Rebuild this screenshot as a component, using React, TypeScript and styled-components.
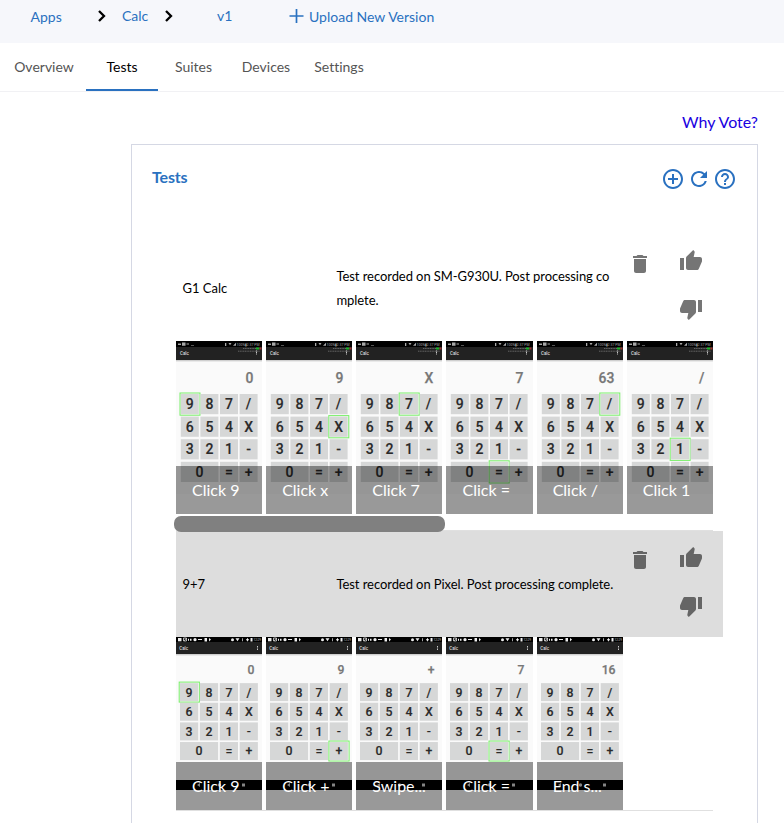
import React from "react";
import styled, { createGlobalStyle } from "styled-components";
import {
  MdAddCircleOutline,
  MdDelete,
  MdHelpOutline,
  MdRefresh,
  MdThumbDown,
  MdThumbUp,
} from "react-icons/md";

const GlobalStyle = createGlobalStyle`
  * { box-sizing: border-box; }
  html, body { margin: 0; background: #fff; }
  body {
    height: 823px;
    overflow: hidden;
    font-family: Lato, sans-serif;
    font-variant-ligatures: none;
    color: #111;
  }
  svg { display: block; flex: none; }
`;

const Page = styled.div`
  height: 823px;
  overflow: hidden;
`;

const Breadcrumbs = styled.nav`
  display: flex;
  height: 43px;
  padding-left: 30.5px;
  background: #f6f7fb;
`;

const Crumb = styled.a<{ $width: number; $top?: number }>`
  width: ${(p) => p.$width}px;
  padding-top: ${(p) => p.$top ?? 6}px;
  font-size: 14px;
  line-height: 19px;
  color: #2a71c0;
  white-space: nowrap;
`;

const Separator = styled.svg<{ $gap: number }>`
  width: 10px;
  height: 14px;
  margin: 9px ${(p) => p.$gap}px 0 0;
`;

const Plus = styled.svg`
  width: 15px;
  height: 15px;
  margin: 9px 5px 0 -0.5px;
`;

const Tabs = styled.div`
  display: flex;
  height: 49px;
  border-bottom: 1px solid #f1f1f4;
`;

const Tab = styled.button<{ $width: number; $shift?: number; $active?: boolean }>`
  width: ${(p) => p.$width}px;
  height: 48px;
  padding: 2px 0 0 ${(p) => p.$shift ?? 0}px;
  border: 0;
  border-bottom: 2px solid ${(p) => (p.$active ? "#2a71c0" : "transparent")};
  background: none;
  font: 14px/20px Lato, sans-serif;
  font-variant-ligatures: none;
  color: ${(p) => (p.$active ? "#000" : "#555")};
  text-align: center;
  white-space: nowrap;
`;

const Content = styled.main`
  width: 627px;
  margin-left: 131px;
`;

const VoteRow = styled.div`
  display: flex;
  justify-content: flex-end;
  height: 52px;
  padding-top: 19px;
`;

const VoteLink = styled.a`
  font-size: 16px;
  line-height: 22px;
  color: #1a00e0;
`;

const Card = styled.section`
  height: 720px;
  border: 1px solid #d5d8e4;
`;

const CardHeader = styled.header`
  display: flex;
  justify-content: space-between;
  height: 90px;
  padding: 22px 20px 0;
`;

const Title = styled.h2`
  margin: -1px 0 0;
  font-size: 16px;
  line-height: 22px;
  font-weight: 700;
  letter-spacing: -0.15px;
  color: #2a71c0;
`;

const Tools = styled.div`
  display: flex;
  gap: 2px;
  color: #2a71c0;
`;

const TestList = styled.div`
  width: 547px;
  margin-left: 44px;
`;

const TestRow = styled.div<{ $selected?: boolean }>`
  display: grid;
  grid-template-columns: 154px 291.5px 51px 24px;
  align-items: center;
  height: 106px;
  padding-left: 6.5px;
  background: ${(p) => (p.$selected ? "#ddd" : "#fff")};
  color: #000;
  font-size: 13px;
  line-height: 24px;
`;

const Status = styled.div`
  width: 280px;
  letter-spacing: -0.07px;
  word-break: break-all;
`;

const IconButton = styled.button`
  display: flex;
  padding: 0;
  border: 0;
  background: none;
  color: rgba(0, 0, 0, 0.54);
`;

const DeleteCell = styled.div`
  align-self: start;
  padding-top: 17px;
`;

const Votes = styled.div<{ $top: number }>`
  display: flex;
  flex-direction: column;
  gap: 24px;
  align-self: start;
  padding-top: ${(p) => p.$top}px;
`;

const Strip = styled.div<{ $height: number }>`
  width: 537px;
  height: ${(p) => p.$height}px;
  border-bottom: 1px solid #e0e0e0;
`;

const Frames = styled.div`
  display: flex;
  gap: 4px;
`;

const Frame = styled.figure`
  position: relative;
  flex: none;
  width: 86.17px;
  height: 173px;
  margin: 0;
  overflow: hidden;
`;

const Caption = styled.figcaption`
  position: absolute;
  inset: auto 0 0;
  height: 48px;
  padding: 12px 0 12px 16px;
  background: rgba(0, 0, 0, 0.4);
  color: #fff;
  font-size: 16px;
  line-height: 24px;
  white-space: nowrap;
`;

const ScrollThumb = styled.div`
  position: relative;
  z-index: 1;
  width: 271px;
  height: 16px;
  margin: 2px 0 0 -2px;
  border-radius: 7px;
  background: #808080;
`;

type Device = "galaxy" | "pixel";

interface Step {
  label: string;
  display: string;
  hit?: string;
}

const KEYS = [
  ["9", "8", "7", "/"],
  ["6", "5", "4", "X"],
  ["3", "2", "1", "-"],
  ["0", "=", "+"],
];

function GalaxyStatus() {
  return (
    <g fill="#a8a8a8" fontFamily="Roboto, sans-serif" fontSize="4.4">
      <path d="M2 2.5h3v1.4H2zM6 1.5h3.5v3.2H6zM10.5 2.5h2.5v1h-2.5zM15 4.3h3v.5h-3z" />
      <path d="M49 2h1.3v3H49zM52.5 2h3L54 4.3zM57 4.8l3-3v3z" />
      <text x="60.5" y="4.7" textLength="23" lengthAdjust="spacingAndGlyphs">
        100%▮2:37 PM
      </text>
      <path
        d="M67 7.5h13M62 10.2h22"
        stroke="#6c6c6c"
        strokeWidth=".9"
        strokeDasharray="1.2 .5"
      />
      <path d="M80 6.5h3.4v2H80z" fill="#18b828" />
      <path d="M83.4 6.5h2v2h-2z" fill="#a72c2c" />
    </g>
  );
}

function PixelStatus() {
  return (
    <g fill="#eee" fontFamily="Roboto, sans-serif" fontSize="4">
      <path d="M2 1h3.5v3.3H2z" />
      <path d="M7.5 1h3v3h-3zM8 4l2.5-3" fill="none" stroke="#ddd" strokeWidth=".8" />
      <path d="M12 1.7h1v2h-1zM14 1.7h1.5v2H14zM22 2h4v1.1h-4z" />
      <circle cx="19" cy="2.7" r="1.6" />
      <path d="M28.5 1h2.5v3.5h-2.5zM33 1v3.5l2-2z" />
      <circle cx="56.5" cy="2.7" r="1.5" />
      <path d="M59.5 1.3h4L61.5 4.3zM66 1.3h.7v3H66zM70 2.2h3v1h-3zM71 1.2h1v3h-1zM74.5 1h2v3.4h-2z" />
      <text x="77.5" y="4.2" fill="#ccc" textLength="7.5" lengthAdjust="spacingAndGlyphs">
        12:29
      </text>
    </g>
  );
}

function PhoneScreen({ device, display, hit }: { device: Device; display: string; hit?: string }) {
  const pixel = device === "pixel";
  const left = pixel ? 4 : 4.8;
  const top = pixel ? 46.1 : 53;
  const colStep = pixel ? 19.9 : 19.6;
  const rowStep = pixel ? 19.65 : 22.6;
  const keyWidth = pixel ? 18.2 : 18;
  const keyHeight = pixel ? 18 : 20.2;
  const headerTop = pixel ? 5 : 6;
  const headerEnd = pixel ? 17 : 19;
  return (
    <svg width="87" height="153" viewBox="0 0 87 153" fontFamily="Roboto, sans-serif">
      <rect width="87" height="153" fill="#fafafa" />
      <rect y={headerEnd} width="87" height="1.4" fill="#cfcfcf" />
      <rect width="87" height={headerEnd} fill="#222" />
      <rect width="87" height={headerTop} fill="#000" />
      {pixel ? <PixelStatus /> : <GalaxyStatus />}
      <text x={pixel ? 3.2 : 4} y={pixel ? 12.6 : 14.2} fontSize="4.5" fill="#ddd" fontWeight="500">
        Calc
      </text>
      <path
        d={pixel ? "M81.5 9v4" : "M80.5 9.5v4.5"}
        stroke="#ddd"
        strokeWidth=".9"
        strokeDasharray="1 .5"
      />
      <text
        x={pixel ? 78.5 : 77.3}
        y={pixel ? 37.1 : 41.9}
        textAnchor="end"
        fontSize={pixel ? 12.2 : 13.9}
        fontWeight="500"
        fill="#777"
        stroke="#777"
        strokeWidth=".25"
      >
        {display}
      </text>
      {KEYS.map((row, r) =>
        row.map((key, c) => {
          const wide = key === "0";
          const col = r === 3 && c > 0 ? c + 1 : c;
          const x = left + col * colStep;
          const y = top + r * rowStep;
          const w = wide ? keyWidth + colStep : keyWidth;
          return (
            <g key={key}>
              <rect x={x} y={y} width={w} height={keyHeight} fill="#d6d7d7" />
              <text
                x={x + w / 2}
                y={y + keyHeight / 2 + (pixel ? 4.4 : 4.9)}
                textAnchor="middle"
                fontSize={pixel ? 12.3 : 14}
                fontWeight="500"
                fill="#2a2a2a"
                stroke="#2a2a2a"
                strokeWidth=".15"
              >
                {key}
              </text>
              {hit === key && (
                <rect
                  x={x - 0.8}
                  y={y - 1}
                  width={w + 2}
                  height={keyHeight + 2}
                  fill="none"
                  stroke="#78ee68"
                  strokeWidth="1"
                />
              )}
            </g>
          );
        }),
      )}
      {pixel && (
        <g>
          <rect y="143" width="87" height="10" fill="#000" />
          <path d="M21 148l3-2v4z" fill="#ddd" />
          <circle cx="43.5" cy="148" r="1.7" fill="#ddd" />
          <rect x="66" y="146.5" width="3" height="3" fill="#ddd" />
        </g>
      )}
    </svg>
  );
}

function Filmstrip({ device, steps }: { device: Device; steps: Step[] }) {
  return (
    <Frames>
      {steps.map((step) => (
        <Frame key={step.label}>
          <PhoneScreen device={device} display={step.display} hit={step.hit} />
          <Caption>{step.label}</Caption>
        </Frame>
      ))}
    </Frames>
  );
}

function TestEntry({ name, status, selected }: { name: string; status: string; selected?: boolean }) {
  return (
    <TestRow $selected={selected}>
      <div>{name}</div>
      <Status>{status}</Status>
      <DeleteCell>
        <IconButton aria-label="Delete">
          <MdDelete size={24} />
        </IconButton>
      </DeleteCell>
      <Votes $top={selected ? 15 : 14}>
        <IconButton aria-label="Vote up">
          <MdThumbUp size={24} />
        </IconButton>
        <IconButton aria-label="Vote down">
          <MdThumbDown size={24} />
        </IconButton>
      </Votes>
    </TestRow>
  );
}

function Chevron({ gap }: { gap: number }) {
  return (
    <Separator $gap={gap} viewBox="0 0 10 14">
      <path d="M2 2l5 5-5 5" fill="none" stroke="#000" strokeWidth="2.3" />
    </Separator>
  );
}

const galaxySteps: Step[] = [
  { label: "Click 9", display: "0", hit: "9" },
  { label: "Click x", display: "9", hit: "X" },
  { label: "Click 7", display: "X", hit: "7" },
  { label: "Click =", display: "7", hit: "=" },
  { label: "Click /", display: "63", hit: "/" },
  { label: "Click 1", display: "/", hit: "1" },
];

const pixelSteps: Step[] = [
  { label: "Click 9", display: "0", hit: "9" },
  { label: "Click +", display: "9", hit: "+" },
  { label: "Swipe...", display: "+" },
  { label: "Click =", display: "7", hit: "=" },
  { label: "End s...", display: "16" },
];

export default function App() {
  return (
    <Page>
      <GlobalStyle />
      <Breadcrumbs>
        <Crumb $width={66.5} $top={7}>Apps</Crumb>
        <Chevron gap={15} />
        <Crumb $width={42}>Calc</Crumb>
        <Chevron gap={43} />
        <Crumb $width={72.5}>v1</Crumb>
        <Plus viewBox="0 0 15 15">
          <path d="M7.5 0v14M.5 7h14" stroke="#2a71c0" strokeWidth="1.7" />
        </Plus>
        <Crumb $width={150} $top={7}>Upload New Version</Crumb>
      </Breadcrumbs>
      <Tabs>
        <Tab $width={86} $shift={2}>Overview</Tab>
        <Tab $width={72} $active>Tests</Tab>
        <Tab $width={71}>Suites</Tab>
        <Tab $width={74}>Devices</Tab>
        <Tab $width={72}>Settings</Tab>
      </Tabs>
      <Content>
        <VoteRow>
          <VoteLink>Why Vote?</VoteLink>
        </VoteRow>
        <Card>
          <CardHeader>
            <Title>Tests</Title>
            <Tools>
              <MdAddCircleOutline size={24} />
              <MdRefresh size={24} />
              <MdHelpOutline size={24} />
            </Tools>
          </CardHeader>
          <TestList>
            <TestEntry name="G1 Calc" status="Test recorded on SM-G930U. Post processing complete." />
            <Strip $height={190}>
              <Filmstrip device="galaxy" steps={galaxySteps} />
              <ScrollThumb />
            </Strip>
            <TestEntry name="9+7" status="Test recorded on Pixel. Post processing complete." selected />
            <Strip $height={174}>
              <Filmstrip device="pixel" steps={pixelSteps} />
            </Strip>
          </TestList>
        </Card>
      </Content>
    </Page>
  );
}
